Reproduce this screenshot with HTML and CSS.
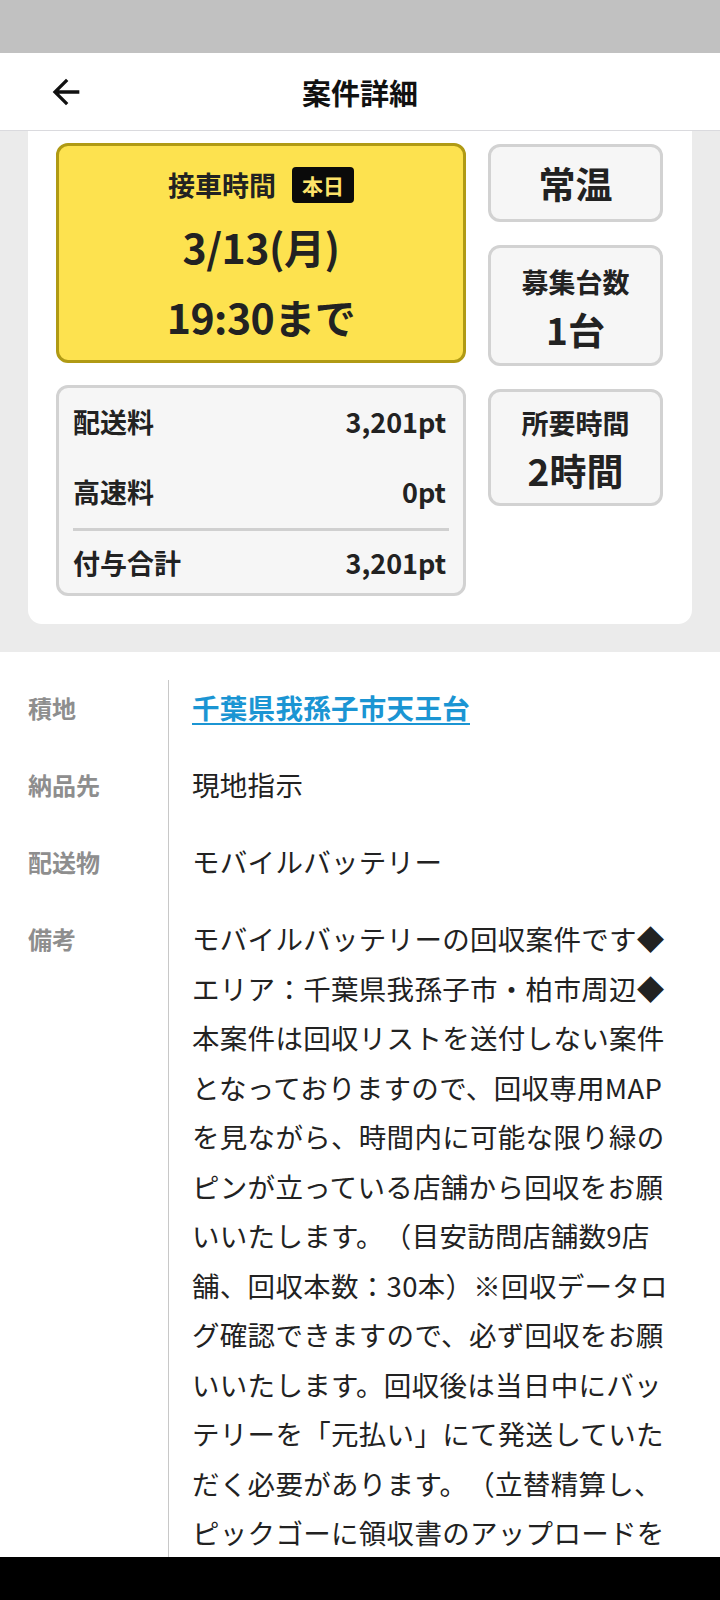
FILE: index.html
```html
<!DOCTYPE html>
<html lang="ja">
<head>
<meta charset="utf-8">
<title>案件詳細</title>
<link rel="stylesheet" href="styles.css">
</head>
<body>
<div class="status"></div>
<header class="appbar">
  <div class="appbar-left">
    <svg class="back" viewBox="0 0 24 24" width="40" height="40" aria-hidden="true"><path d="M20 11H7.83l5.59-5.59L12 4l-8 8 8 8 1.41-1.41L7.83 13H20v-2z" fill="#111"/></svg>
  </div>
  <h1 class="title">案件詳細</h1>
  <div></div>
</header>

<section class="summary">
  <div class="card">
    <div class="col-left">
      <div class="pickup">
        <div class="pickup-head">
          <span class="pickup-label">接車時間</span>
          <span class="badge">本日</span>
        </div>
        <div class="pickup-big">3/13(月)</div>
        <div class="pickup-big">19:30まで</div>
      </div>
      <div class="fees">
        <div class="fee-row"><span>配送料</span><span>3,201pt</span></div>
        <div class="fee-row fee-row-2"><span>高速料</span><span>0pt</span></div>
        <div class="fee-divider"></div>
        <div class="fee-row fee-row-3"><span>付与合計</span><span>3,201pt</span></div>
      </div>
    </div>
    <div class="col-right">
      <div class="tile tile-temp">常温</div>
      <div class="tile tile-count">
        <div class="tile-label">募集台数</div>
        <div class="tile-value">1台</div>
      </div>
      <div class="tile tile-time">
        <div class="tile-label">所要時間</div>
        <div class="tile-value">2時間</div>
      </div>
    </div>
  </div>
</section>

<section class="details">
  <div class="d-label d-first">積地</div>
  <div class="d-value d-first"><a class="link" href="#">千葉県我孫子市天王台</a></div>

  <div class="d-label">納品先</div>
  <div class="d-value">現地指示</div>

  <div class="d-label">配送物</div>
  <div class="d-value">モバイルバッテリー</div>

  <div class="d-label">備考</div>
  <div class="d-value d-note">モバイルバッテリーの回収案件です◆エリア：千葉県我孫子市・柏市周辺◆本案件は回収リストを送付しない案件となっておりますので、回収専用MAPを見ながら、時間内に可能な限り緑のピンが立っている店舗から回収をお願いいたします。（目安訪問店舗数9店舗、回収本数：30本）※回収データログ確認できますので、必ず回収をお願いいたします。回収後は当日中にバッテリーを「元払い」にて発送していただく必要があります。（立替精算し、ピックゴーに領収書のアップロードをお願いいたします。）</div>
</section>

<div class="navbar"></div>
</body>
</html>
```

FILE: styles.css
```css
* { box-sizing: border-box; }
html, body { margin: 0; padding: 0; }
body {
  font-family: "Noto Sans CJK JP", "Noto Sans", sans-serif;
  color: #222;
  background: #fff;
  width: 720px;
  text-spacing-trim: space-all;
}

.status { height: 53px; background: #c1c1c1; }

.appbar {
  height: 78px;
  background: #fff;
  border-bottom: 1px solid #dadade;
  display: grid;
  grid-template-columns: 1fr auto 1fr;
  align-items: center;
}
.appbar-left { padding-left: 46px; display: flex; align-items: center; }
.back { display: block; }
.title {
  margin: 0;
  font-size: 29px;
  font-weight: 700;
  color: #111;
  line-height: 40px;
}

.summary {
  background: #ebebeb;
  padding: 0 28px 28px;
}
.card {
  background: #fff;
  border-radius: 0 0 14px 14px;
  padding: 12px 29px 28px 28px;
  display: flex;
  gap: 22px;
  align-items: flex-start;
}
.col-left {
  width: 410px;
  display: flex;
  flex-direction: column;
  gap: 22px;
}
.col-right {
  width: 175px;
  display: flex;
  flex-direction: column;
  gap: 23px;
  margin-top: 1px;
}

.pickup {
  height: 220px;
  background: #fde24f;
  border: 3px solid #b09a14;
  border-radius: 12px;
  padding: 20px 0 0;
  text-align: center;
}
.pickup-head {
  display: flex;
  justify-content: center;
  align-items: center;
  gap: 16px;
  height: 38px;
}
.pickup-label { font-size: 27px; font-weight: 700; line-height: 38px; }
.badge {
  background: #0a0a0a;
  color: #fde36a;
  font-size: 21px;
  font-weight: 700;
  line-height: 36px;
  height: 36px;
  padding: 0 10px;
  border-radius: 4px;
}
.pickup-head + .pickup-big { margin-top: 7px; }
.pickup-big {
  font-size: 41px;
  font-weight: 700;
  line-height: 70px;
  letter-spacing: -0.5px;
}

.fees {
  background: #f6f6f6;
  border: 3px solid #d2d2d2;
  border-radius: 12px;
  padding: 9px 17px 5px 14px;
}
.fee-row {
  display: flex;
  justify-content: space-between;
  font-size: 27px;
  font-weight: 700;
  line-height: 50px;
}
.fee-row-2 { margin-top: 20px; }
.fee-divider {
  height: 3px;
  background: #d0d0d0;
  margin: 11px -3px 0 0;
}
.fee-row-3 { margin-top: 7px; }

.tile {
  background: #f6f6f6;
  border: 3px solid #d2d2d2;
  border-radius: 12px;
  text-align: center;
  font-weight: 700;
}
.tile-temp {
  height: 78px;
  font-size: 37px;
  line-height: 72px;
}
.tile-label { font-size: 27px; line-height: 46px; }
.tile-value { font-size: 37px; line-height: 48px; }
.tile-count { padding: 11px 0 10px; }
.tile-time { padding: 8px 0 9px; }

.details {
  margin-top: 28px;
  display: grid;
  grid-template-columns: 168px 1fr;
}
.d-label {
  padding: 0 0 27.5px 28px;
  font-size: 24px;
  font-weight: 700;
  color: #8e8e8e;
  line-height: 49.5px;
}
.d-value {
  border-left: 1px solid #c8c8c8;
  padding: 0 44px 27.5px 23px;
  font-size: 27.5px;
  letter-spacing: 0.3px;
  line-height: 49.5px;
  color: #222;
}
.d-first { padding-top: 3px; }
.link {
  color: #1b95d3;
  font-weight: 700;
  text-decoration: underline;
  text-decoration-thickness: 2px;
  text-underline-offset: 4px;
}
.d-note { line-break: strict; }

.navbar {
  position: fixed;
  left: 0;
  right: 0;
  bottom: 0;
  height: 43px;
  background: #000;
}
```
